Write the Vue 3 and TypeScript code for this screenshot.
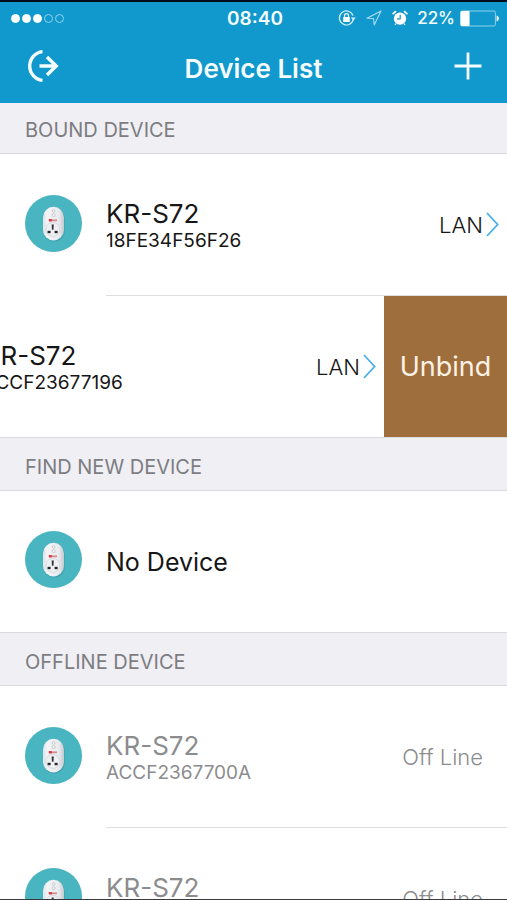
<script setup lang="ts">
import { ref } from 'vue'

interface Device {
  name: string
  mac?: string
  status?: string
  online?: boolean
  swiped?: boolean
}

interface Section {
  title: string
  offline?: boolean
  devices: Device[]
}

const signal = [true, true, true, false, false]

const sections = ref<Section[]>([
  {
    title: 'BOUND DEVICE',
    devices: [
      { name: 'KR-S72', mac: '18FE34F56F26', status: 'LAN', online: true },
      { name: 'KR-S72', mac: 'ACCF23677196', status: 'LAN', online: true, swiped: true },
    ],
  },
  {
    title: 'FIND NEW DEVICE',
    devices: [{ name: 'No Device' }],
  },
  {
    title: 'OFFLINE DEVICE',
    offline: true,
    devices: [
      { name: 'KR-S72', mac: 'ACCF2367700A', status: 'Off Line' },
      { name: 'KR-S72', mac: 'ACCF2367700A', status: 'Off Line' },
    ],
  },
])

function unbind(section: Section, index: number) {
  section.devices.splice(index, 1)
}
</script>

<template>
  <div class="screen">
    <header class="top">
      <div class="status">
        <div class="signal">
          <span v-for="(on, i) in signal" :key="i" class="dot" :class="{ on }"></span>
        </div>
        <span class="clock">08:40</span>
        <div class="indicators">
          <svg class="i-lock" viewBox="0 0 18 16" width="18" height="16" aria-hidden="true">
            <path d="M15.2 9.6A7 7 0 1 1 15 5.6" fill="none" stroke="#d5f3fc" stroke-width="1.2" />
            <path d="M12.8 7.4h5l-2.5 3.4z" fill="#d5f3fc" />
            <rect x="5.2" y="7" width="6.6" height="5" rx="0.6" fill="#fff" />
            <path d="M6.5 7.2V5.7a2 2 0 0 1 4 0v1.5" fill="none" stroke="#fff" stroke-width="1.2" />
          </svg>
          <svg class="i-loc" viewBox="0 0 16 16" width="16" height="16" aria-hidden="true">
            <path d="M15 1L1 8.2l6.6.3.6 6.5z" fill="none" stroke="#a9def2" stroke-width="1.1" stroke-linejoin="round" />
          </svg>
          <svg class="i-alarm" viewBox="0 0 16 16" width="16" height="16" aria-hidden="true">
            <circle cx="8" cy="8.6" r="6.2" fill="#fff" />
            <path d="M1.2 3.6L3.4 1.6M14.8 3.6L12.6 1.6" stroke="#fff" stroke-width="1.8" stroke-linecap="round" />
            <path d="M4 13.6l-1 1.2M12 13.6l1 1.2" stroke="#fff" stroke-width="1.2" />
            <path d="M8.2 4.8v4H5" fill="none" stroke="#1198cc" stroke-width="1.2" />
          </svg>
          <span class="percent">22%</span>
          <svg class="i-batt" viewBox="0 0 39 17" width="39" height="17" aria-hidden="true">
            <rect x="0.6" y="1" width="34.8" height="15" rx="1.6" fill="none" stroke="#8fd3ed" stroke-width="1" />
            <rect x="0.6" y="1" width="9" height="15" rx="1" fill="#fff" />
            <path d="M36.6 5.6a3 3 0 0 1 0 5.8z" fill="#fff" />
          </svg>
        </div>
      </div>
      <div class="nav">
        <button type="button" class="nav-btn" aria-label="Log out">
          <svg viewBox="0 0 34 34" width="34" height="34" aria-hidden="true">
            <path d="M17.5 2.6a14.5 14.5 0 0 0 0 28.8M14.5 17h17M22 8L31.2 17 22 26" fill="none" stroke="#f4fdff" stroke-width="3.4" />
          </svg>
        </button>
        <h1>Device List</h1>
        <button type="button" class="nav-btn" aria-label="Add device">
          <svg viewBox="0 0 28 28" width="28" height="28" aria-hidden="true">
            <path d="M14 .5v27M.5 14h27" stroke="#f4fdff" stroke-width="2.8" />
          </svg>
        </button>
      </div>
    </header>

    <main class="list">
      <section v-for="section in sections" :key="section.title" :class="{ offline: section.offline }">
        <h2>{{ section.title }}</h2>
        <ul>
          <li v-for="(d, i) in section.devices" :key="i" class="row" :class="{ swiped: d.swiped }">
            <a href="#" class="device" @click.prevent>
              <svg class="plug" viewBox="0 0 57 57" width="57" height="57" aria-hidden="true">
                <defs>
                  <linearGradient id="shell" x1="0" x2="1" y1="0" y2="0">
                    <stop offset="0" stop-color="#dfe4e7" />
                    <stop offset="0.2" stop-color="#f3f4f6" />
                    <stop offset="0.75" stop-color="#e9ebee" />
                    <stop offset="1" stop-color="#c3cacf" />
                  </linearGradient>
                </defs>
                <circle cx="28.5" cy="28.5" r="28.5" fill="#49b5c0" />
                <rect x="18.4" y="13" width="21.4" height="33.6" rx="10.6" fill="#3596a3" opacity="0.6" />
                <rect x="18" y="11.8" width="21" height="33.6" rx="10.5" fill="url(#shell)" />
                <circle cx="28.6" cy="16" r="1.4" fill="none" stroke="#c2c6ca" stroke-width="0.8" />
                <circle cx="28.6" cy="20.2" r="1.6" fill="none" stroke="#c2c6ca" stroke-width="0.8" />
                <rect x="23.8" y="24" width="3.2" height="2.4" rx="0.6" fill="#e0383f" />
                <rect x="27" y="24.4" width="5" height="1.8" fill="#cf8d93" />
                <circle cx="27.8" cy="34.4" r="7" fill="#eff0f2" stroke="#cdd1d5" stroke-width="0.7" />
                <path d="M26.6 29.4h2.2l-.3 5.4h-1.6z" fill="#35383c" />
                <rect x="22.6" y="35.8" width="3" height="2.4" fill="#24272b" />
                <rect x="29.6" y="35.8" width="3" height="2.4" fill="#24272b" />
              </svg>
              <span class="body">
                <span class="info" :class="{ detailed: d.mac }">
                  <span class="name">{{ d.name }}</span>
                  <span v-if="d.mac" class="mac">{{ d.mac }}</span>
                </span>
                <span v-if="d.status" class="state">{{ d.status }}</span>
                <svg v-if="d.online" class="chevron" viewBox="0 0 13 25" width="13" height="25" aria-hidden="true">
                  <path d="M1 1l10.6 11.5L1 24" fill="none" stroke="#4aaeea" stroke-width="1.8" />
                </svg>
              </span>
            </a>
            <button v-if="d.swiped" type="button" class="unbind" @click="unbind(section, i)">Unbind</button>
          </li>
        </ul>
      </section>
    </main>
  </div>
</template>

<style>
body {
  margin: 0;
}
</style>

<style scoped>
.screen {
  box-sizing: border-box;
  height: 100vh;
  overflow: hidden;
  display: flex;
  flex-direction: column;
  border-top: 2px solid #020c1c;
  border-bottom: 1px solid #3a3a3c;
  background: #fff;
  font-family: Inter, "Liberation Sans", sans-serif;
  color: #161616;
}

.top {
  flex: none;
  background: #1198cc;
  color: #f4fdff;
}

.status {
  display: grid;
  grid-template-columns: 1fr auto 1fr;
  align-items: center;
  height: 32px;
  padding: 0 8px 0 11px;
}

.signal {
  display: flex;
  gap: 2px;
}

.dot {
  box-sizing: border-box;
  width: 9px;
  height: 9px;
  border: 1px solid #8fd3ed;
  border-radius: 50%;
}

.dot.on {
  border-color: #fff;
  background: #fff;
}

.clock {
  font-size: 19px;
  font-weight: 600;
}

.indicators {
  display: flex;
  align-items: center;
  justify-content: flex-end;
}

.i-loc,
.i-alarm {
  margin-left: 10px;
}

.percent {
  margin: 0 5px 0 9px;
  font-size: 17px;
  font-weight: 500;
}

.nav {
  display: grid;
  grid-template-columns: 1fr auto 1fr;
  align-items: center;
  height: 69px;
  padding: 0 25px;
}

.nav-btn {
  display: flex;
  justify-self: start;
  padding: 0;
  margin-bottom: 5px;
  border: 0;
  background: none;
  cursor: pointer;
}

.nav-btn:last-child {
  justify-self: end;
}

h1 {
  margin: 0;
  font-size: 26px;
  line-height: 30px;
  font-weight: 600;
}

.list {
  flex: 1;
  min-height: 0;
  overflow: hidden;
}

h2 {
  box-sizing: border-box;
  display: flex;
  align-items: flex-end;
  height: 54px;
  margin: 0;
  padding: 0 25px 11px;
  border-top: 1px solid #dadadd;
  border-bottom: 1px solid #dadadd;
  background: #efeff4;
  color: #7d7d82;
  font-size: 20px;
  line-height: 24px;
  font-weight: 400;
}

section:first-child h2 {
  height: 51px;
  border-top: 0;
}

ul {
  margin: 0;
  padding: 0;
  list-style: none;
}

.row {
  display: flex;
  overflow: hidden;
}

.row.swiped {
  justify-content: flex-end;
}

.device {
  box-sizing: border-box;
  flex: 0 0 100%;
  display: flex;
  align-items: stretch;
  gap: 24px;
  padding-left: 25px;
  color: inherit;
  text-decoration: none;
}

.plug {
  flex: none;
  align-self: center;
  margin-bottom: 4px;
}

.body {
  flex: 1;
  display: flex;
  align-items: center;
  height: 141px;
  padding-right: 8px;
}

.row:not(:last-child) .body {
  border-bottom: 1px solid #dedee0;
}

.info {
  flex: 1;
  display: flex;
  flex-direction: column;
}

.info.detailed {
  padding-top: 4px;
}

.name {
  font-size: 25px;
  line-height: 28px;
}

.detailed .name {
  font-size: 26px;
}

.mac {
  font-size: 19px;
  line-height: 26px;
}

.state {
  font-size: 22px;
  line-height: 28px;
  font-weight: 300;
}

.chevron {
  flex: none;
  margin-left: 3px;
}

.unbind {
  flex: 0 0 123px;
  padding: 0;
  border: 0;
  background: #9e6e3c;
  color: #fdf1e4;
  font-family: inherit;
  font-size: 27px;
  cursor: pointer;
}

.offline .name,
.offline .mac,
.offline .state {
  color: #8c8c8e;
}

.offline .body {
  padding-right: 24px;
}
</style>
